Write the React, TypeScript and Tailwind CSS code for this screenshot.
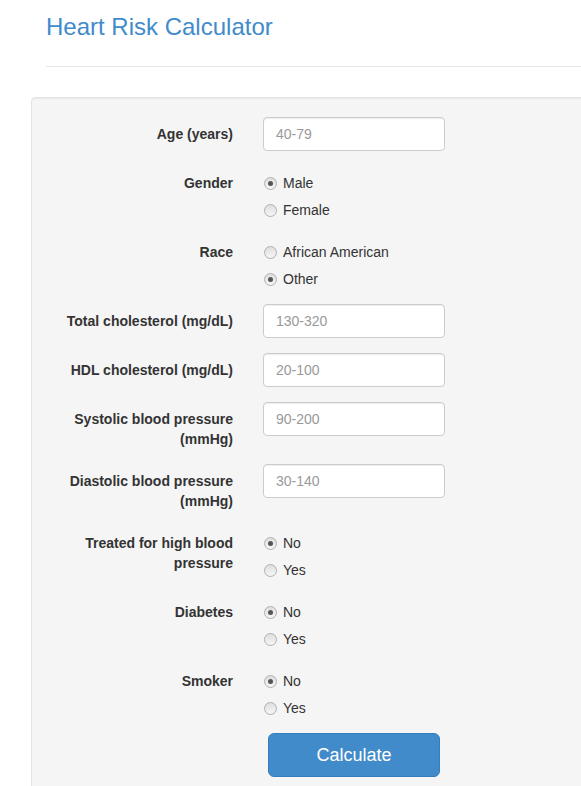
import React from "react";

const font = { fontFamily: '"Liberation Sans", Arial, Helvetica, sans-serif' };

function Radio({ checked, label }: { checked?: boolean; label: string }) {
  return (
    <div className="flex items-center h-[27px] pt-[7px]">
      <span className="w-[13px] h-[13px] rounded-full border border-[#b0b0b0] bg-gradient-to-b from-[#dedede] to-[#f6f6f6] flex items-center justify-center ml-[1px]">
        {checked && <span className="w-[5px] h-[5px] rounded-full bg-[#555]" />}
      </span>
      <span className="ml-[6px] text-[14px] leading-[20px] text-[#333]">{label}</span>
    </div>
  );
}

function Label({ children }: { children: React.ReactNode }) {
  return (
    <div className="w-[182px] text-right font-bold text-[14px] leading-[20px] pt-[7px] text-[#333]">
      {children}
    </div>
  );
}

function InputRow({ label, ph }: { label: React.ReactNode; ph: string }) {
  return (
    <div className="flex gap-[30px] mb-[15px]">
      <Label>{label}</Label>
      <input
        placeholder={ph}
        className="w-[182px] h-[34px] bg-white border border-[#ccc] rounded-[4px] px-[12px] text-[14px] text-[#555] placeholder:text-[#999] shadow-[inset_0_1px_1px_rgba(0,0,0,0.075)] outline-none"
      />
    </div>
  );
}

function RadioRow({ label, opts, sel }: { label: React.ReactNode; opts: string[]; sel: number }) {
  return (
    <div className="flex gap-[30px] mb-[15px]">
      <Label>{label}</Label>
      <div className="w-[182px] flex flex-col">
        {opts.map((o, i) => (
          <Radio key={o} label={o} checked={i === sel} />
        ))}
      </div>
    </div>
  );
}

export default function App() {
  return (
    <div className="w-[581px] h-[786px] overflow-hidden bg-white" style={font}>
      <div className="pl-[46px]">
        <div className="pt-[13px] pb-[26px] border-b border-[#e5e5e5]">
          <h1 className="text-[24px] leading-[27px] text-[#428bca]">Heart Risk Calculator</h1>
        </div>
      </div>
      <div className="ml-[31px] mt-[30px] w-[600px] h-[800px] bg-[#f5f5f5] border border-[#e3e3e3] rounded-tl-[4px] pt-[19px] pl-[19px] shadow-[inset_0_1px_1px_rgba(0,0,0,0.05)]">
        <InputRow label="Age (years)" ph="40-79" />
        <RadioRow label="Gender" opts={["Male", "Female"]} sel={0} />
        <RadioRow label="Race" opts={["African American", "Other"]} sel={1} />
        <InputRow label="Total cholesterol (mg/dL)" ph="130-320" />
        <InputRow label="HDL cholesterol (mg/dL)" ph="20-100" />
        <InputRow label={<>Systolic blood pressure<br />(mmHg)</>} ph="90-200" />
        <InputRow label={<>Diastolic blood pressure<br />(mmHg)</>} ph="30-140" />
        <RadioRow label={<>Treated for high blood<br />pressure</>} opts={["No", "Yes"]} sel={0} />
        <RadioRow label="Diabetes" opts={["No", "Yes"]} sel={0} />
        <RadioRow label="Smoker" opts={["No", "Yes"]} sel={0} />
        <div className="flex gap-[30px]">
          <div className="w-[182px]" />
          <div className="w-[182px] flex justify-center">
            <button className="w-[172px] h-[44px] bg-[#428bca] border border-[#357ebd] rounded-[6px] text-white text-[18px] leading-[24px]">
              Calculate
            </button>
          </div>
        </div>
      </div>
    </div>
  );
}
